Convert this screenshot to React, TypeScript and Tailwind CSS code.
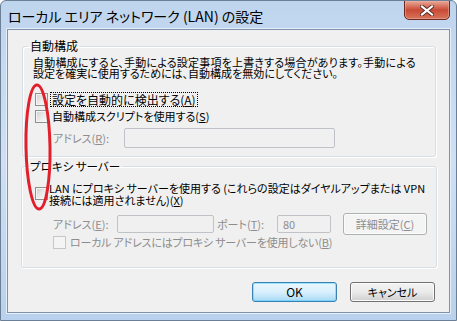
import React from 'react';

const font = "font-['Meiryo_UI','Noto_Sans_CJK_JP',sans-serif] [font-feature-settings:'palt']";

const CheckBox = ({ disabled = false }: { disabled?: boolean }) => (
  <span
    className={`inline-block w-[13px] h-[13px] shrink-0 border ${
      disabled
        ? 'border-[#c7c7c7] bg-[#f4f4f4]'
        : 'border-[#8e8f8f] bg-gradient-to-br from-[#cfcfcf] via-[#e9e9e9] to-[#fafafa] shadow-[inset_0_0_0_1px_#f4f4f4]'
    }`}
  />
);

const TextBox = ({ className = '', value = '' }: { className?: string; value?: string }) => (
  <div className={`shrink-0 h-[18px] border border-[#bfc3c8] rounded-[2px] bg-[#f0f0f0] text-[#8d8d8d] text-[11px] leading-[16px] pl-[5px] ${className}`}>
    {value}
  </div>
);

const Button = ({ children, primary = false, disabled = false }: { children: React.ReactNode; primary?: boolean; disabled?: boolean }) => (
  <div
    className={`shrink-0 flex items-center justify-center rounded-[3px] border whitespace-nowrap ${
      disabled
        ? 'w-[84px] h-[22px] text-[11px] border-[#adb2b5] bg-[#f4f4f4] text-[#8d8d8d] shadow-[inset_0_0_0_1px_#fbfbfb]'
        : primary
        ? 'w-[85px] h-[20px] text-[12px] border-[#3c7fb1] bg-gradient-to-b from-[#eaf6fd] via-[#d9f0fc] to-[#a7d9f5] text-black shadow-[inset_0_0_0_1px_#48d0fd80]'
        : 'w-[85px] h-[20px] text-[11px] border-[#707070] bg-gradient-to-b from-[#f2f2f2] via-[#ebebeb] to-[#cfcfcf] text-black shadow-[inset_0_0_0_1px_#fcfcfc]'
    }`}
  >
    {children}
  </div>
);

export default function App() {
  return (
    <div className={`relative w-[457px] h-[321px] overflow-hidden flex flex-col bg-gradient-to-b from-[#bfd5ee] via-[#cfe0f3] to-[#b9d1ec] border border-[#6b7f97] rounded-t-[6px] ${font}`}>
      {/* Title bar */}
      <div className="h-[28px] shrink-0 flex items-start justify-between pl-[7px] pr-[6px]">
        <span className="mt-[6px] text-[14px] leading-[18px] text-black whitespace-nowrap">ローカル エリア ネットワーク (LAN) の設定</span>
        <div className="w-[46px] h-[20px] -mt-px rounded-b-[5px] border border-[#6e2a22] bg-gradient-to-b from-[#e8a898] via-[#c84a36] to-[#d8735b] shadow-[inset_0_0_0_1px_#f0b3a580] flex items-center justify-center">
          <svg width="14" height="11" viewBox="0 0 14 11">
            <path d="M2 1.5 L12 9.5 M12 1.5 L2 9.5" stroke="#5a2a24" strokeWidth="4" strokeLinecap="square" />
            <path d="M2 1.5 L12 9.5 M12 1.5 L2 9.5" stroke="#ffffff" strokeWidth="2.2" strokeLinecap="square" />
          </svg>
        </div>
      </div>

      {/* Client area */}
      <div className="flex-1 mx-[6px] mb-[7px] border border-[#7e93ab] bg-[#f0f0f0] shadow-[0_0_0_1px_#e6eff9] flex flex-col text-[12px] text-black whitespace-nowrap">
        {/* Auto config group */}
        <fieldset className="ml-[14px] mr-[13px] mt-[9px] border border-[#d5dfe5] rounded-[3px] pl-[5px] pb-[8px] shadow-[inset_1px_1px_0_#ffffff,1px_1px_0_#ffffff]">
          <legend className="px-[2px] leading-[14px]">自動構成</legend>
          <p className="ml-[5px] mt-[4px] text-[11px] leading-[11px]">
            <span className="tracking-[0.2px]">自動構成にすると、手動による設定事項を上書きする場合があります。手動による</span>
            <br />
            設定を確実に使用するためには、自動構成を無効にしてください。
          </p>
          <div className="ml-[7px] mt-[12px] h-[16px] flex items-center gap-[2px]">
            <CheckBox />
            <span className="border border-dotted border-black px-px leading-[13px]">
              設定を自動的に検出する(<u>A</u>)
            </span>
          </div>
          <div className="ml-[7px] mt-px h-[16px] flex items-center gap-[4px]">
            <CheckBox />
            <span className="text-[11px] leading-[14px]">自動構成スクリプトを使用する(<u>S</u>)</span>
          </div>
          <div className="ml-[25px] mt-[4px] flex items-center">
            <span className="w-[71px] shrink-0 text-[11px] text-[#8d8d8d]">
              アドレス(<u>R</u>):
            </span>
            <TextBox className="w-[211px] !h-[20px]" />
          </div>
        </fieldset>

        {/* Proxy group */}
        <fieldset className="ml-[13px] mr-[12px] mt-[2px] border border-[#d5dfe5] rounded-[3px] pl-[5px] pb-[18px] shadow-[inset_1px_1px_0_#ffffff,1px_1px_0_#ffffff]">
          <legend className="px-[2px] leading-[14px] ml-[1px] text-[11.5px]">プロキシ サーバー</legend>
          <div className="ml-[8px] mt-[8px] flex items-center gap-[1px]">
            <CheckBox />
            <span className="text-[11px] leading-[12px] pt-px">
              LAN にプロキシ サーバーを使用する (これらの設定はダイヤルアップまたは VPN
              <br />
              接続には適用されません)(<u>X</u>)
            </span>
          </div>
          <div className="ml-[26px] mt-[7px] h-[22px] flex items-center text-[11px] text-[#8d8d8d]">
            <span className="w-[64px] shrink-0">
              アドレス(<u>E</u>):
            </span>
            <TextBox className="w-[97px]" />
            <span className="ml-[3px] w-[60px] shrink-0">
              ポート(<u>T</u>):
            </span>
            <TextBox className="w-[54px]" value="80" />
            <div className="ml-[12px]">
              <Button disabled>
                詳細設定(<u>C</u>)
              </Button>
            </div>
          </div>
          <div className="ml-[26px] h-[14px] flex items-center gap-[4px] text-[11px] text-[#8d8d8d]">
            <CheckBox disabled />
            <span className="leading-[14px] tracking-[-0.2px]">
              ローカル アドレスにはプロキシ サーバーを使用しない(<u>B</u>)
            </span>
          </div>
        </fieldset>

        {/* Buttons */}
        <div className="mt-[14px] mr-[14px] flex justify-end gap-[13px]">
          <Button primary>OK</Button>
          <Button>キャンセル</Button>
        </div>
      </div>

      {/* Red annotation */}
      <svg className="absolute left-0 top-0 pointer-events-none" width="457" height="321">
        <ellipse cx="37" cy="146" rx="12" ry="62" fill="none" stroke="#e2202c" strokeWidth="3" transform="rotate(-1 37 146)" />
      </svg>
    </div>
  );
}
